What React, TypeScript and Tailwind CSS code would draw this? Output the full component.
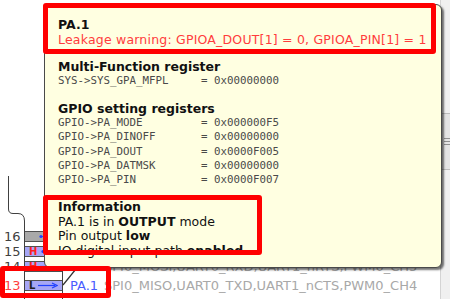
import React from "react";

const regs = [
  ["GPIO->PA_MODE", "0x000000F5"],
  ["GPIO->PA_DINOFF", "0x00000000"],
  ["GPIO->PA_DOUT", "0x0000F005"],
  ["GPIO->PA_DATMSK", "0x00000000"],
  ["GPIO->PA_PIN", "0x0000F007"],
];

function MonoLine({ name, value }: { name: string; value: string }) {
  return (
    <div className="whitespace-pre leading-[14.25px]">
      {name.padEnd(22, " ") + "= " + value}
    </div>
  );
}

function Arrow() {
  return (
    <svg width="20" height="7" viewBox="0 0 20 7">
      <line x1="0" y1="3.5" x2="17" y2="3.5" stroke="#2040ff" strokeWidth="1.2" />
      <path d="M14 1 L19 3.5 L14 6" fill="none" stroke="#2040ff" strokeWidth="1.2" />
    </svg>
  );
}

function Dot() {
  return (
    <svg width="8" height="7" viewBox="0 0 8 7">
      <circle cx="3" cy="3.5" r="1.6" fill="#2040ff" />
      <line x1="3" y1="3.5" x2="8" y2="3.5" stroke="#2040ff" strokeWidth="1" />
    </svg>
  );
}

type Pin = {
  num: string;
  numColor: string;
  fill: string;
  level?: string;
  levelColor?: string;
  dir: "in" | "out";
  name: string;
  funcs: string;
};

const pins: Pin[] = [
  { num: "16", numColor: "text-[#404040]", fill: "bg-[#a9a9a9]", dir: "in", name: "", funcs: "" },
  { num: "15", numColor: "text-[#404040]", fill: "bg-[#a6a6f6]", level: "H", levelColor: "text-[#ff2020]", dir: "in", name: "", funcs: "" },
  { num: "14", numColor: "text-[#404040]", fill: "bg-[#a6a6f6]", level: "H", levelColor: "text-[#ff2020]", dir: "out", name: "PA.0", funcs: "SPI0_MOSI,UART0_RXD,UART1_nRTS,PWM0_CH5" },
  { num: "13", numColor: "text-[#ff4040]", fill: "bg-[#a6a6f6]", level: "L", levelColor: "text-[#202020]", dir: "out", name: "PA.1", funcs: "SPI0_MISO,UART0_TXD,UART1_nCTS,PWM0_CH4" },
];

function PinRow({ p }: { p: Pin }) {
  return (
    <div className={`flex items-center h-[15px] ${p.num === "13" ? "mt-[4px]" : ""}`}>
      <div className={`w-[25px] pl-[4px] text-[13px] leading-[12px] ${p.numColor}`}>{p.num}</div>
      <div
        className={`w-[37px] h-[11px] ${p.fill} border-y border-[#505050] flex items-center gap-[3px] ${
          p.level ? "pl-[4px]" : "pl-[13px]"
        }`}
      >
        {p.level && <span className={`${p.levelColor} text-[10px] font-bold leading-none`}>{p.level}</span>}
        {p.dir === "in" ? <Dot /> : <Arrow />}
      </div>
      <div className="w-[42px] pl-[8px] text-[13px] leading-[16px] text-[#4a5cff]">{p.name}</div>
      <div className="text-[13px] leading-[16px] text-[#a8a8a8] whitespace-nowrap">{p.funcs}</div>
    </div>
  );
}

export default function App() {
  return (
    <div className="relative w-[450px] h-[299px] overflow-hidden bg-white font-['DejaVu_Sans',Verdana,sans-serif]">
      {/* chip outline drawing */}
      <svg className="absolute left-0 top-0" width="450" height="299">
        <path
          d="M8.5 176 V209 Q8.5 213.5 13 213.5 H18 Q24.5 213.5 24.5 221 V299"
          fill="none"
          stroke="#404040"
          strokeWidth="1"
        />
        <line x1="62.5" y1="226" x2="62.5" y2="299" stroke="#404040" strokeWidth="1" />
        <line x1="63" y1="285" x2="80" y2="264" stroke="#303030" strokeWidth="1.2" />
      </svg>

      {/* pin rows */}
      <div className="absolute left-0 top-[229px] flex flex-col">
        {pins.map((p) => (
          <PinRow key={p.num} p={p} />
        ))}
      </div>

      {/* scrollbar */}
      <div className="absolute right-0 top-0 w-[10px] h-[299px] bg-[#f0f0f0] border-l border-[#d4d4d4] flex flex-col">
        <div className="h-[113px]" />
        <div className="h-[57px] bg-[#e4e4e4] border-y border-[#bdbdbd] flex flex-col justify-center gap-[2px] pl-[3px]">
          <div className="h-px bg-[#909090]" />
          <div className="h-px bg-[#909090]" />
          <div className="h-px bg-[#909090]" />
        </div>
      </div>

      {/* tooltip */}
      <div className="absolute left-[44px] top-[4px] w-[398px] h-[264px] bg-[#ffffe1] border border-[#4a4a4a] rounded-[6px] shadow-[2px_2px_2px_rgba(0,0,0,0.55)] pl-[13px] pt-[12px] text-[12.5px] text-[#111]">
        <div className="leading-[15px] font-bold">PA.1</div>
        <div className="leading-[15px] text-[#ff3c3c] whitespace-nowrap tracking-[0.2px]">
          Leakage warning: GPIOA_DOUT[1] = 0, GPIOA_PIN[1] = 1
        </div>

        <div className="mt-[12.7px] leading-[14px] font-bold">Multi-Function register</div>
        <div className="font-['DejaVu_Sans_Mono',monospace] text-[10.8px] text-[#4a4a4a]">
          <MonoLine name="SYS->SYS_GPA_MFPL" value="0x00000000" />
        </div>

        <div className="mt-[14.25px] leading-[14px] font-bold">GPIO setting registers</div>
        <div className="font-['DejaVu_Sans_Mono',monospace] text-[10.8px] text-[#4a4a4a]">
          {regs.map(([n, v]) => (
            <MonoLine key={n} name={n} value={v} />
          ))}
        </div>

        <div className="mt-[13px] leading-[14.5px] font-bold">Information</div>
        <div className="leading-[14.5px]">
          PA.1 is in <b>OUTPUT</b> mode
        </div>
        <div className="leading-[14.5px]">
          Pin output <b>low</b>
        </div>
        <div className="leading-[14.5px] whitespace-nowrap">
          IO digital input path <b>enabled</b>
        </div>
      </div>

      {/* red annotation boxes */}
      <div className="absolute left-[43px] top-[3px] w-[393px] h-[51px] border-[5px] border-[#ff0000] rounded-[3px] pointer-events-none" />
      <div className="absolute left-[43px] top-[195px] w-[219px] h-[60px] border-[5px] border-[#ff0000] rounded-[3px] pointer-events-none" />
      <div className="absolute left-0 top-[266px] w-[111px] h-[32px] border-[5px] border-[#ff0000] rounded-[3px] pointer-events-none" />
    </div>
  );
}
